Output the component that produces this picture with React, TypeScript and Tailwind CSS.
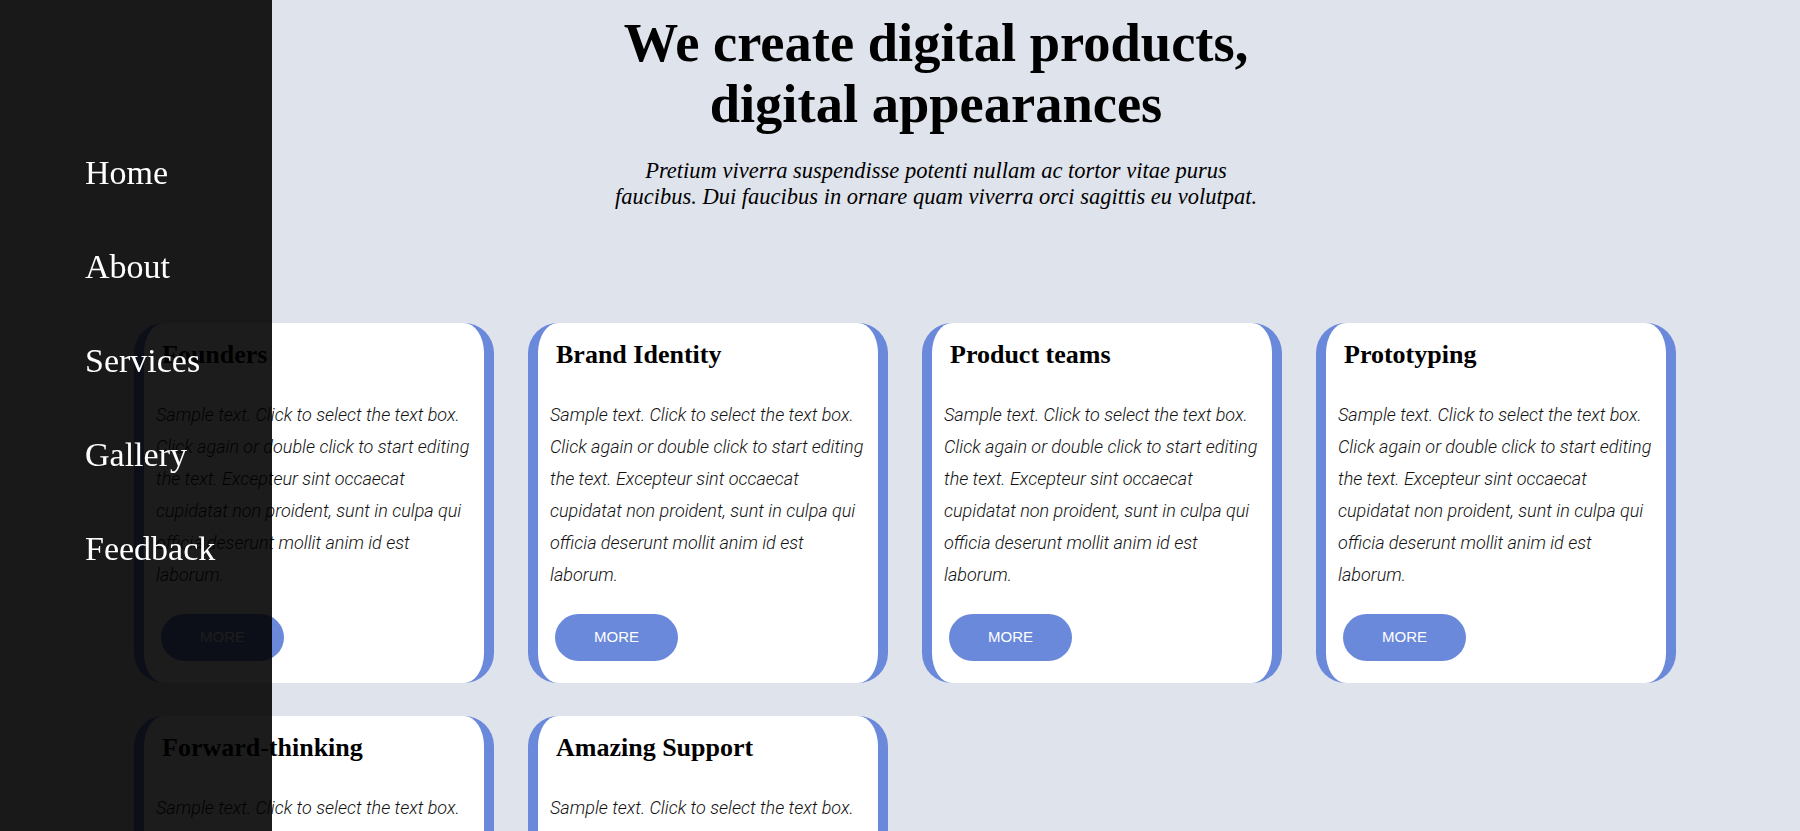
import React from 'react';

const navItems = ['Home', 'About', 'Services', 'Gallery', 'Feedback'];

const cards = [
  'Founders',
  'Brand Identity',
  'Product teams',
  'Prototyping',
  'Forward-thinking',
  'Amazing Support',
];

const sampleText =
  'Sample text. Click to select the text box. Click again or double click to start editing the text. Excepteur sint occaecat cupidatat non proident, sunt in culpa qui officia deserunt mollit anim id est laborum.';

const Card: React.FC<{ title: string }> = ({ title }) => (
  <div className="w-[360px] h-[360px] bg-white border-x-[10px] border-[#6a89db] rounded-[30px] flex flex-col">
    <h3 className="pt-[17px] px-[18px] text-[26px] leading-[30px] font-bold text-black font-['Liberation_Serif',serif]">
      {title}
    </h3>
    <p className="mt-[29px] pl-[12px] pr-[8px] text-[18px] leading-[32px] italic font-light text-[#111] font-['Roboto',sans-serif]">
      {sampleText}
    </p>
    <button className="mt-[23px] ml-[17px] w-[123px] h-[47px] shrink-0 rounded-full bg-[#6a89db] text-white text-[15px] font-['Liberation_Sans',Arial,sans-serif]">
      MORE
    </button>
  </div>
);

const App: React.FC = () => {
  return (
    <div className="min-h-screen bg-[#dfe3eb] font-['Liberation_Serif',serif]">
      {/* Sidebar overlay */}
      <aside className="fixed top-0 left-0 bottom-0 w-[272px] bg-black/[0.89] z-10">
        <nav className="flex flex-col gap-[54px] pt-[153px] pl-[85px]">
          {navItems.map((item) => (
            <a key={item} href="#" className="text-white text-[34px] leading-[40px] font-['Liberation_Serif',serif]">
              {item}
            </a>
          ))}
        </nav>
      </aside>

      {/* Hero */}
      <header className="flex flex-col items-center text-center pl-[72px] pt-[12px]">
        <h1 className="text-[54.5px] leading-[61px] font-bold text-black">
          We create digital products,
          <br />
          digital appearances
        </h1>
        <p className="mt-[24px] text-[22.5px] leading-[26px] italic text-black">
          Pretium viverra suspendisse potenti nullam ac tortor vitae purus
          <br />
          faucibus. Dui faucibus in ornare quam viverra orci sagittis eu volutpat.
        </p>
      </header>

      {/* Cards */}
      <section className="grid grid-cols-[repeat(4,360px)] gap-x-[34px] gap-y-[33px] pl-[134px] pt-[113px] pb-[60px]">
        {cards.map((c) => (
          <Card key={c} title={c} />
        ))}
      </section>
    </div>
  );
};

export default App;
